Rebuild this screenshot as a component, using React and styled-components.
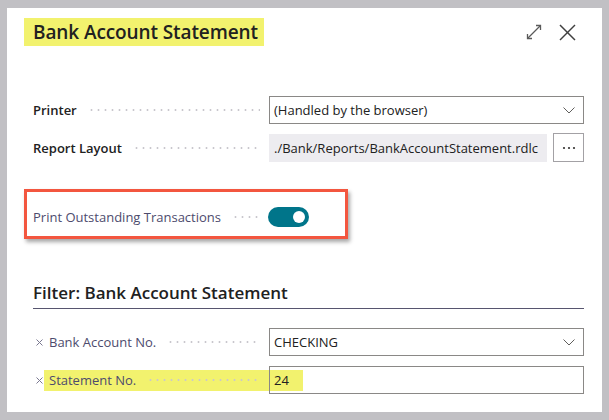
import React from 'react'
import styled, { createGlobalStyle } from 'styled-components'

const GlobalStyle = createGlobalStyle`
    html, body {
        margin: 0;
        padding: 0;
        background: #c1c0c4;
    }
    body {
        font-family: "Segoe UI", "Open Sans", "Noto Sans", sans-serif;
        color: #212121;
    }
`

const Dialog = styled.div`
    box-sizing: border-box;
    width: 595px;
    height: 404px;
    margin: 8px 7px;
    background: #fff;
    padding: 10px 18px 0 26px;
`

const Header = styled.div`
    display: flex;
    align-items: center;
    justify-content: space-between;
    height: 28px;
`

const Title = styled.h1`
    margin: 0 0 0 -9px;
    height: 28px;
    line-height: 28px;
    padding: 0 6px 0 9px;
    background: #f2f26e;
    font-size: 19px;
    font-weight: 600;
    letter-spacing: -0.1px;
`

const Actions = styled.div`
    display: flex;
    align-items: center;
    gap: 17px;
    margin-right: 8px;

    svg {
        display: block;
    }
`

const Form = styled.div`
    display: flex;
    flex-direction: column;
    gap: 10px;
    margin-top: 50px;
`

const Row = styled.div`
    display: grid;
    grid-template-columns: 236px minmax(0, 1fr);
    align-items: center;
    height: 28px;
`

const LabelCell = styled.div`
    display: flex;
    align-items: center;
    height: 100%;
`

const ClearMark = styled.svg`
    flex: none;
    margin-left: 3px;
    width: 7px;
    height: 7px;
`

const LabelBody = styled.div`
    flex: 1;
    display: flex;
    align-items: center;
    height: 21px;
    padding: 0 9px 0 ${p => (p.$filter ? 5 : 0)}px;
    margin-left: ${p => (p.$filter ? 1 : 0)}px;
    background: ${p => (p.$mark ? '#f2f26e' : 'transparent')};
`

const Label = styled.span`
    font-size: 13px;
    font-weight: ${p => (p.$strong ? 600 : 400)};
    color: ${p => (p.$strong ? '#212121' : '#4d4b6d')};
    white-space: nowrap;
`

const Leader = styled.span`
    flex: 1;
    height: 4px;
    margin-left: 11px;
    background-image: radial-gradient(circle, #c9c7cd 0.9px, transparent 1.2px);
    background-size: 7px 4px;
    background-repeat: repeat-x;
    background-position: left center;
`

const Field = styled.div`
    box-sizing: border-box;
    display: flex;
    align-items: center;
    height: 28px;
    padding: 0 8px 0 ${p => (p.$flush ? 0 : 4)}px;
    border: 1px solid ${p => (p.$readOnly ? 'transparent' : '#8a8886')};
    background: ${p => (p.$readOnly ? '#edecf0' : '#fff')};
    font-size: 13px;
    color: #212121;
    white-space: nowrap;
    overflow: hidden;
    flex: 1;
    min-width: 0;
`

const Value = styled.span`
    flex: 1;
`

const MarkedValue = styled.span`
    display: flex;
    align-items: center;
    height: 21px;
    padding: 0 14px 0 4px;
    background: #f2f26e;
`

const FieldGroup = styled.div`
    display: flex;
    gap: 6px;
    min-width: 0;
`

const EllipsisButton = styled.button`
    box-sizing: border-box;
    flex: none;
    width: 31px;
    height: 29px;
    margin-top: -1px;
    padding: 0;
    border: 1px solid #a3a1a5;
    background: #fff;
    display: flex;
    align-items: center;
    justify-content: center;
`

const Callout = styled.div`
    box-sizing: border-box;
    width: 324px;
    height: 50px;
    margin: 27px 0 0 -9px;
    padding: 6px 6px 0;
    border: 3px solid #f3563f;
    box-shadow: 2px 3px 4px rgba(0, 0, 0, 0.35);
    display: flex;
    align-items: center;
`

const Toggle = styled.div`
    box-sizing: border-box;
    width: 41px;
    height: 20px;
    margin-left: -1px;
    border-radius: 10px;
    background: #00758a;
    display: flex;
    align-items: center;
    justify-content: ${p => (p.$on ? 'flex-end' : 'flex-start')};
    padding: 0 4px;
`

const Knob = styled.span`
    width: 12px;
    height: 12px;
    border-radius: 50%;
    background: #fff;
`

const SectionTitle = styled.h2`
    margin: 42px 0 0;
    padding-bottom: 3px;
    height: 24px;
    line-height: 24px;
    font-size: 17px;
    font-weight: 600;
    color: #212121;
    border-bottom: 1px solid #57556f;
`

const FilterForm = styled(Form)`
    margin-top: 19px;
`

const Chevron = () => (
    <svg width="12" height="7" viewBox="0 0 12 7">
        <polyline points="0.5,0.5 6,6 11.5,0.5" fill="none" stroke="#605e5c" strokeWidth="1" />
    </svg>
)

const ExpandIcon = () => (
    <svg width="16" height="16" viewBox="0 0 16 16" fill="none" stroke="#5a5a5a" strokeWidth="1.3">
        <line x1="1.5" y1="14.5" x2="14.5" y2="1.5" />
        <polyline points="10,1.5 14.5,1.5 14.5,6" />
        <polyline points="1.5,10 1.5,14.5 6,14.5" />
    </svg>
)

const CloseIcon = () => (
    <svg width="17" height="17" viewBox="0 0 17 17" fill="none" stroke="#404040" strokeWidth="1.5">
        <line x1="1" y1="1" x2="16" y2="16" />
        <line x1="16" y1="1" x2="1" y2="16" />
    </svg>
)

const Clear = () => (
    <ClearMark viewBox="0 0 7 7">
        <line x1="0.5" y1="0.5" x2="6.5" y2="6.5" stroke="#7a7890" strokeWidth="1" />
        <line x1="6.5" y1="0.5" x2="0.5" y2="6.5" stroke="#7a7890" strokeWidth="1" />
    </ClearMark>
)

const Dots = () => (
    <svg width="14" height="4" viewBox="0 0 14 4">
        <circle cx="2" cy="2" r="1.1" fill="#323130" />
        <circle cx="7" cy="2" r="1.1" fill="#323130" />
        <circle cx="12" cy="2" r="1.1" fill="#323130" />
    </svg>
)

export default function App() {
    return (
        <>
            <GlobalStyle />
            <Dialog>
                <Header>
                    <Title>Bank Account Statement</Title>
                    <Actions>
                        <ExpandIcon />
                        <CloseIcon />
                    </Actions>
                </Header>

                <Form>
                    <Row>
                        <LabelCell>
                            <LabelBody>
                                <Label $strong>Printer</Label>
                                <Leader />
                            </LabelBody>
                        </LabelCell>
                        <Field>
                            <Value>(Handled by the browser)</Value>
                            <Chevron />
                        </Field>
                    </Row>
                    <Row>
                        <LabelCell>
                            <LabelBody>
                                <Label $strong>Report Layout</Label>
                                <Leader />
                            </LabelBody>
                        </LabelCell>
                        <FieldGroup>
                            <Field $readOnly>./Bank/Reports/BankAccountStatement.rdlc</Field>
                            <EllipsisButton>
                                <Dots />
                            </EllipsisButton>
                        </FieldGroup>
                    </Row>
                </Form>

                <Callout>
                    <Row>
                        <LabelCell>
                            <LabelBody>
                                <Label>Print Outstanding Transactions</Label>
                                <Leader />
                            </LabelBody>
                        </LabelCell>
                        <Toggle $on>
                            <Knob />
                        </Toggle>
                    </Row>
                </Callout>

                <SectionTitle>Filter: Bank Account Statement</SectionTitle>

                <FilterForm>
                    <Row>
                        <LabelCell>
                            <Clear />
                            <LabelBody $filter>
                                <Label>Bank Account No.</Label>
                                <Leader />
                            </LabelBody>
                        </LabelCell>
                        <Field>
                            <Value>CHECKING</Value>
                            <Chevron />
                        </Field>
                    </Row>
                    <Row>
                        <LabelCell>
                            <Clear />
                            <LabelBody $filter $mark>
                                <Label>Statement No.</Label>
                                <Leader />
                            </LabelBody>
                        </LabelCell>
                        <Field $flush>
                            <MarkedValue>24</MarkedValue>
                        </Field>
                    </Row>
                </FilterForm>
            </Dialog>
        </>
    )
}
